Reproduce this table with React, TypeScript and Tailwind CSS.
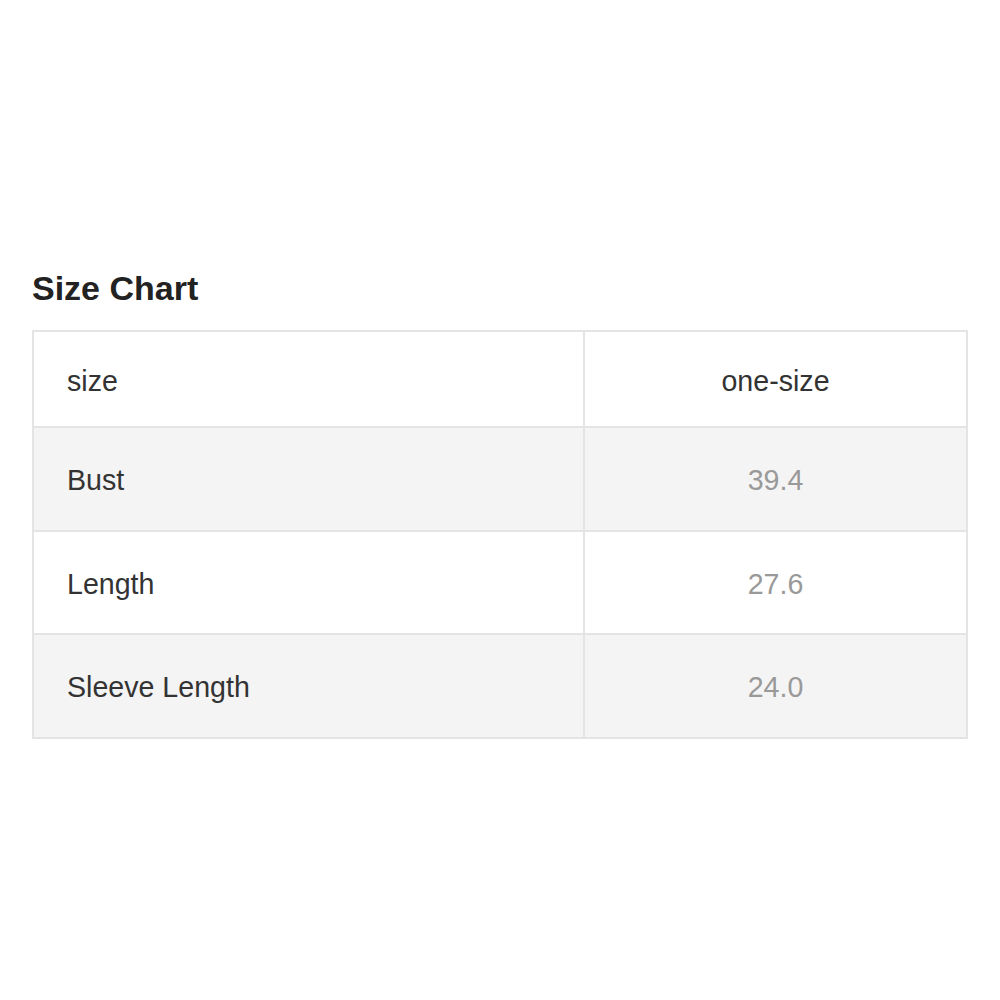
import React from 'react';

const rows = [
  { label: 'Bust', value: '39.4' },
  { label: 'Length', value: '27.6' },
  { label: 'Sleeve Length', value: '24.0' },
];

export default function App() {
  return (
    <main className="min-h-screen bg-white px-8 pt-[268px] font-['Liberation_Sans',Arial,sans-serif] text-[#333]">
      <h2 className="text-[34px] font-bold leading-[40px] text-[#222]">Size Chart</h2>
      <table className="mt-[22px] w-full border-collapse text-[28.6px]">
        <tbody>
          <tr className="h-[96px] bg-white">
            <td className="w-[551px] border-2 border-[#e4e4e4] pt-1 pl-[33px]">size</td>
            <td className="border-2 border-[#e4e4e4] pt-1 text-center">one-size</td>
          </tr>
          {rows.map((row, i) => (
            <tr key={row.label} className={i % 2 === 0 ? 'h-[104px] bg-[#f4f4f4]' : 'h-[103px] bg-white'}>
              <td className="border-2 border-[#e4e4e4] pt-[3px] pl-[33px]">{row.label}</td>
              <td className="border-2 border-[#e4e4e4] pt-[3px] text-center text-[#999]">{row.value}</td>
            </tr>
          ))}
        </tbody>
      </table>
    </main>
  );
}
